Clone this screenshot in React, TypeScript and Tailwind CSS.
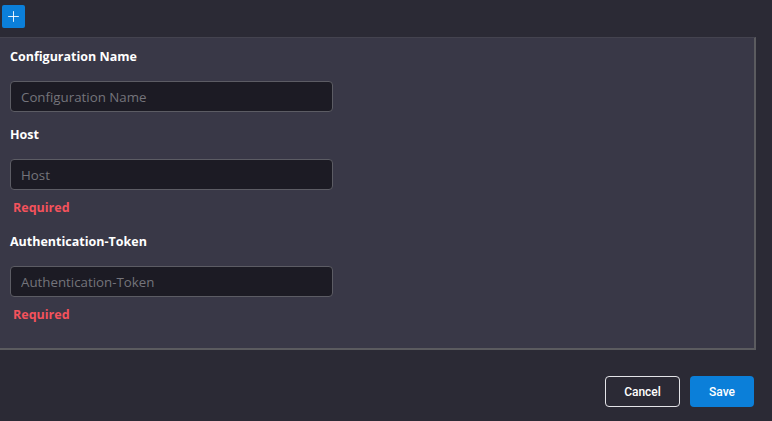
import { Plus } from 'lucide-react';

type Field = {
  label: string;
  required: boolean;
};

const fields: Field[] = [
  { label: 'Configuration Name', required: false },
  { label: 'Host', required: true },
  { label: 'Authentication-Token', required: true },
];

export default function App() {
  return (
    <main className="flex h-[421px] w-[772px] flex-col bg-[#2b2a35] font-['Open_Sans',sans-serif]">
      <div className="flex h-[37px] items-start pl-[2px] pt-[5px]">
        <button className="flex h-[23px] w-[23px] items-center justify-center rounded-[2px] bg-[#0b7fd9] text-white">
          <Plus size={17} strokeWidth={1.25} />
        </button>
      </div>

      <section className="h-[313px] w-[756px] border-t border-r-2 border-b-2 border-t-[#44434f] border-r-[#5b5b5f] border-b-[#5b5b5f] bg-[#393847] pl-[10px] pt-[9px]">
        {fields.map((field, i) => (
          <div key={field.label} className={i === 1 ? 'mb-[14px]' : 'mb-[13px]'}>
            <label className="block text-[12.5px] font-bold leading-[20px] text-white">{field.label}</label>
            <input
              placeholder={field.label}
              className="mt-[14px] h-[31px] w-[323px] rounded-[4px] border border-[#5c5c64] bg-[#1c1b24] px-[10px] text-[13.3px] text-white outline-none placeholder:text-[#74747b]"
            />
            {field.required ? (
              <p className="mt-[8px] pl-[3px] text-[12.5px] font-bold leading-[20px] text-[#f4525c]">Required</p>
            ) : null}
          </div>
        ))}
      </section>

      <div className="flex justify-end gap-[10px] pr-[18px] pt-[26px] font-['Roboto',sans-serif]">
        <button className="h-[31px] w-[75px] rounded-[4px] border border-[#e4e4e8] text-[12px] font-medium text-white">
          Cancel
        </button>
        <button className="h-[31px] w-[64px] rounded-[4px] bg-[#0b7fd9] text-[12px] font-medium text-white">Save</button>
      </div>
    </main>
  );
}
